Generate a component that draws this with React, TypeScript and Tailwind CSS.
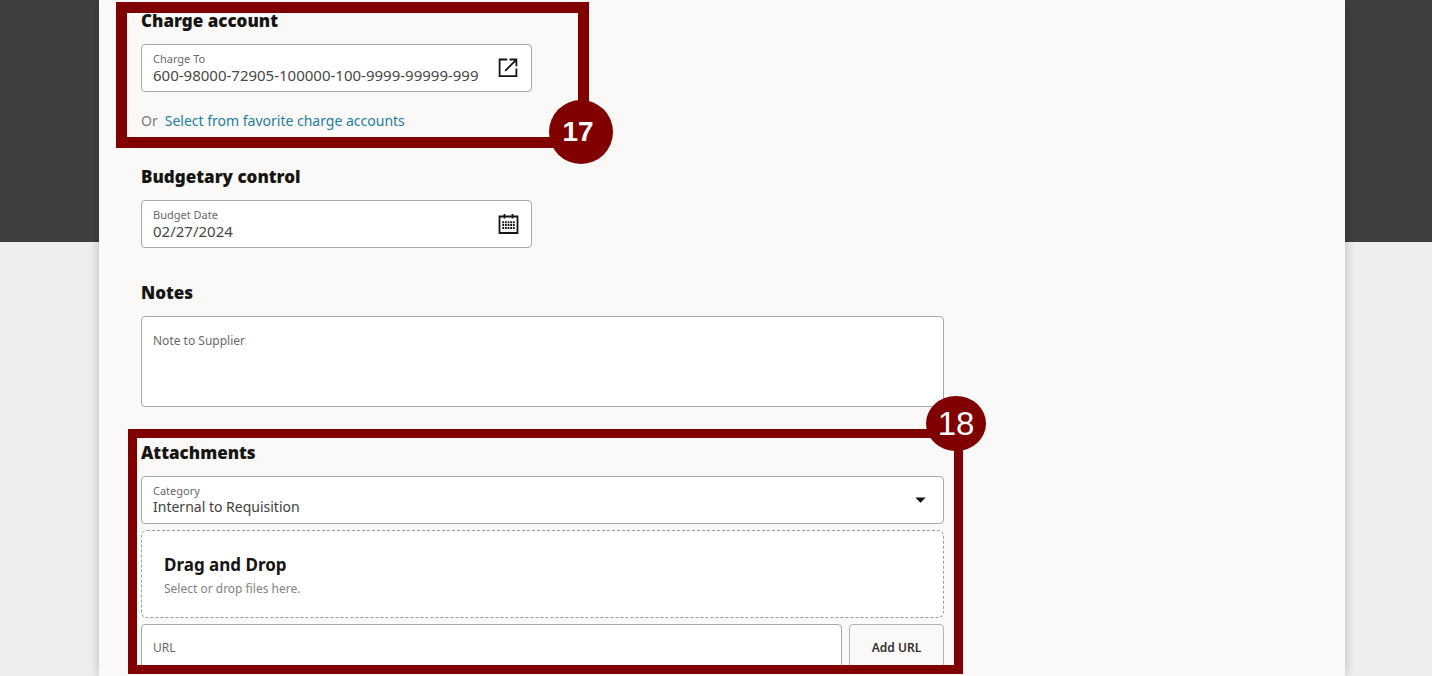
import type { ReactNode } from "react";

function Callout({ children }: { children: ReactNode }) {
  return <div className="pointer-events-none">{children}</div>;
}

function Heading({ children }: { children: ReactNode }) {
  return <h2 className="text-[17px] leading-6 font-black text-[#161513]">{children}</h2>;
}

type FieldProps = { id: string; label: string; value: string; action: string; icon: ReactNode };

function Field({ id, label, value, action, icon }: FieldProps) {
  return (
    <div className="mt-[11px] flex h-12 w-full max-w-[391px] items-center rounded-[4px] border border-[#aaa9a7] bg-white pr-3 pl-[11px]">
      <div className="flex min-w-0 flex-1 flex-col">
        <label htmlFor={id} className="text-[11px] leading-[14px] text-[#6b6966]">{label}</label>
        <input id={id} defaultValue={value} className="w-full min-w-0 bg-transparent text-[15px] leading-[18px] text-[#4a4846] outline-none" />
      </div>
      <button type="button" aria-label={action} className="ml-[19px] text-[#161513]">{icon}</button>
    </div>
  );
}

function OpenIcon() {
  return (
    <svg width="21" height="20" viewBox="0 0 21 20" fill="none" stroke="currentColor" strokeWidth="1.8">
      <path d="M9.2 1.5H1.6V18.2H18.4V10.6" />
      <path d="M11.5 1.5H18.4V8.3M18.2 1.8L7.2 12.8" />
    </svg>
  );
}

function CalendarIcon() {
  return (
    <svg width="21" height="20" viewBox="0 0 21 20" fill="none" stroke="currentColor">
      <path d="M1.5 2.5H19.5V19H1.5Z" strokeWidth="1.8" />
      <path d="M6.5 0V4.5M14.5 0V4.5" strokeWidth="1.8" />
      <path d="M4.3 8.3H16.7M4.3 11.1H16.7M4.3 13.9H16.7" strokeWidth="2" strokeDasharray="1.8 0.85" />
    </svg>
  );
}

export default function App() {
  return (
    <div className="min-h-screen bg-[linear-gradient(#403f3f_242px,#efeeec_242px)] pr-[87px] pl-[99px] font-['Noto_Sans',sans-serif]">
      <main className="h-screen overflow-hidden bg-[#faf9f8] pt-[9px] pr-6 pl-[42px] shadow-[0_0_10px_rgba(0,0,0,0.22)]">
        <form className="w-full max-w-[803px]">
          <section className="relative">
            <Heading>Charge account</Heading>
            <Field id="charge" label="Charge To" value="600-98000-72905-100000-100-9999-99999-99999" action="Open charge account" icon={<OpenIcon />} />
            <p className="mt-[19px] flex gap-[7px] text-sm leading-5 text-[#7c7a77]">
              Or
              <a href="#favorites" className="text-[#227e9e]">Select from favorite charge accounts</a>
            </p>
            <Callout>
              <div className="absolute -top-[7px] -left-[25px] h-[146px] w-[473px] border-[11px] border-[#800000]" />
              <div className="absolute top-[91px] left-[408px] flex size-16 items-center justify-center rounded-full bg-[#800000] pr-1.5 font-['Liberation_Sans',sans-serif] text-[28px] leading-8 font-bold text-white">17</div>
            </Callout>
          </section>

          <section className="mt-[34px]">
            <Heading>Budgetary control</Heading>
            <Field id="date" label="Budget Date" value="02/27/2024" action="Choose date" icon={<CalendarIcon />} />
          </section>

          <section className="mt-[33px]">
            <Heading>Notes</Heading>
            <div className="mt-[11px] flex h-[91px] flex-col rounded-[4px] border border-[#aaa9a7] bg-white px-[11px] pt-4">
              <label htmlFor="note" className="text-xs leading-4 text-[#6b6966]">Note to Supplier</label>
              <textarea id="note" className="min-h-0 w-full flex-1 resize-none bg-transparent text-sm outline-none" />
            </div>
          </section>

          <section className="relative mt-[34px]">
            <Heading>Attachments</Heading>
            <div className="relative mt-[11px] flex h-12 flex-col justify-center rounded-[4px] border border-[#aaa9a7] bg-white px-[11px]">
              <label htmlFor="category" className="text-[11px] leading-[14px] text-[#6b6966]">Category</label>
              <select id="category" className="w-full appearance-none bg-transparent text-sm leading-[18px] text-[#403e3c] outline-none">
                <option>Internal to Requisition</option>
              </select>
              <svg className="pointer-events-none absolute top-5 right-[17px]" width="11" height="6" viewBox="0 0 11 6" fill="#161513">
                <path d="M0.3 0.5H10.7L5.5 5.7Z" />
              </svg>
            </div>
            <label className="mt-1.5 flex h-[88px] flex-col justify-center rounded-[6px] border border-dashed border-[#9e9c9a] bg-white px-[22px] pt-0.5">
              <span className="text-[17px] leading-6 font-bold text-[#161513]">Drag and Drop</span>
              <span className="mt-1 text-xs leading-4 text-[#858380]">Select or drop files here.</span>
              <input type="file" className="sr-only" />
            </label>
            <div className="mt-1.5 flex gap-[7px]">
              <div className="flex h-12 flex-1 items-center gap-2 rounded-[4px] border border-[#aaa9a7] bg-white px-[11px]">
                <label htmlFor="url" className="text-xs leading-4 text-[#6b6966]">URL</label>
                <input id="url" type="url" className="min-w-0 flex-1 bg-transparent text-sm outline-none" />
              </div>
              <button type="button" className="h-12 w-[95px] rounded-[4px] border border-[#b5b3b1] text-xs font-semibold text-[#312f2d]">Add URL</button>
            </div>
            <Callout>
              <div className="absolute -top-3 -left-[13px] h-[245px] w-[835px] border-[9px] border-[#800000]" />
              <div className="absolute -top-[45px] left-[785px] flex h-[55px] w-[60px] items-center justify-center rounded-[50%] bg-[#800000] font-['Liberation_Sans',sans-serif] text-[33px] leading-9 text-white">18</div>
            </Callout>
          </section>
        </form>
      </main>
    </div>
  );
}
